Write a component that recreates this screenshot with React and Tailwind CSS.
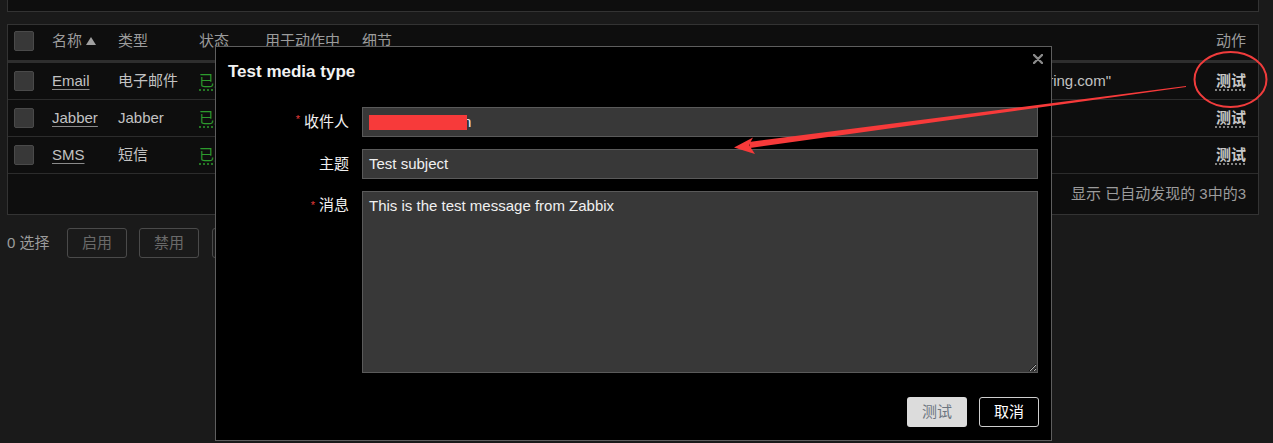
import React from "react";

const Check = () => (
  <div className="w-[20px] h-[20px] rounded-[2px] bg-[#383838] border border-[#4a4a4a]" />
);

const rows = [
  { name: "Email", type: "电子邮件", details: 'SMTP 服务器: "mail.example.com", SMTP helo: "example.com", SMTP 电邮: "zabbix@example-monitoring.com"' },
  { name: "Jabber", type: "Jabber", details: "" },
  { name: "SMS", type: "短信", details: "" },
];

function Row({ r }) {
  return (
    <div className="flex items-center h-[37px] border-b border-[#2c2c2c] text-[15px] text-[#c2c2c2]">
      <div className="w-[38px] pl-[6px]"><Check /></div>
      <div className="w-[66px] pl-[6px]">
        <span className="underline underline-offset-[3px] decoration-[#8a8a8a]">{r.name}</span>
      </div>
      <div className="w-[81px] pl-[6px] whitespace-nowrap">{r.type}</div>
      <div className="w-[66px] pl-[6px] whitespace-nowrap text-[#2d9a2d]">
        <span className="underline decoration-dotted underline-offset-[4px]">已启用</span>
      </div>
      <div className="w-[97px] pl-[6px]"></div>
      <div className="flex-1 min-w-0 pl-[6px] pr-[67px] flex justify-end overflow-hidden whitespace-nowrap">
        <span className="shrink-0">{r.details}</span>
      </div>
      <div className="w-[80px] pr-[12px] text-right font-bold text-[#c8c8c8]">
        <span className="underline decoration-dotted underline-offset-[4px] decoration-[#aaa]">测试</span>
      </div>
    </div>
  );
}

export default function App() {
  return (
    <div className="relative w-[1273px] h-[443px] overflow-hidden bg-[#1a1a1a] font-['Liberation_Sans','Noto_Sans_CJK_SC',sans-serif]">
      <div className="px-[7px]">
        <div className="w-[1252px] h-[12px] border-x border-b border-[#333] bg-[#0e0e0e]" />
        <div className="mt-[12px] w-[1252px] border border-[#333] bg-[#0e0e0e]">
          <div className="flex items-center h-[38px] pb-[3px] border-b-[3px] border-[#2e2e2e] text-[15px] text-[#9c9c9c] box-border">
            <div className="w-[38px] pl-[6px]"><Check /></div>
            <div className="w-[66px] pl-[6px] whitespace-nowrap flex items-center gap-[4px]">
              名称
              <svg width="10" height="8" viewBox="0 0 10 8"><path d="M5 0 L10 8 L0 8 Z" fill="#a0a0a0" /></svg>
            </div>
            <div className="w-[81px] pl-[6px]">类型</div>
            <div className="w-[66px] pl-[6px]">状态</div>
            <div className="w-[97px] pl-[6px] whitespace-nowrap">用于动作中</div>
            <div className="flex-1 pl-[6px]">细节</div>
            <div className="w-[80px] pr-[12px] text-right">动作</div>
          </div>
          {rows.map((r) => (
            <Row key={r.name} r={r} />
          ))}
          <div className="h-[40px] flex items-center justify-end pr-[12px] text-[15px] text-[#9c9c9c]">
            显示 已自动发现的 3中的3
          </div>
        </div>
        <div className="mt-[13px] flex items-center h-[30px] text-[15px] text-[#9c9c9c]">
          <span className="w-[60px]">0 选择</span>
          <button className="w-[60px] h-[30px] rounded-[3px] border border-[#4a4a4a] text-[#6a6a6a]">启用</button>
          <button className="ml-[12px] w-[60px] h-[30px] rounded-[3px] border border-[#4a4a4a] text-[#6a6a6a]">禁用</button>
          <button className="ml-[13px] w-[60px] h-[30px] rounded-[3px] border border-[#4a4a4a] text-[#6a6a6a]">删除</button>
        </div>
      </div>

      {/* Modal */}
      <div className="absolute left-[215px] top-[46px] w-[837px] h-[395px] bg-black border border-[#5e5e5e] z-10">
        <svg className="absolute right-[8px] top-[7px]" width="10" height="10" viewBox="0 0 10 10">
          <path d="M1 1 L9 9 M9 1 L1 9" stroke="#8a8a8a" strokeWidth="2.4" strokeLinecap="round" />
        </svg>
        <div className="pl-[12px] pt-[15px] text-[17px] leading-[20px] font-bold text-[#f2f2f2]">Test media type</div>
        <div className="mt-[25px] flex flex-col gap-[12px] text-[15px] text-[#f0f0f0]">
          <div className="flex items-center">
            <div className="w-[133px] text-right"><span className="text-[#e53a3a] text-[11px] align-top mr-[4px]">*</span>收件人</div>
            <div className="ml-[13px] w-[676px] h-[30px] bg-[#383838] border border-[#5a5a5a] flex items-center pl-[6px]">
              <span className="relative z-10 inline-block w-[98px] h-[15px] bg-[#f73a3a]" />
              <span className="-ml-[4px]">n</span>
            </div>
          </div>
          <div className="flex items-center">
            <div className="w-[133px] text-right">主题</div>
            <div className="ml-[13px] w-[676px] h-[30px] bg-[#383838] border border-[#5a5a5a] flex items-center pl-[6px]">Test subject</div>
          </div>
          <div className="flex items-start">
            <div className="w-[133px] text-right pt-[5px] leading-[18px]"><span className="text-[#e53a3a] text-[11px] align-top mr-[4px]">*</span>消息</div>
            <textarea
              readOnly
              defaultValue="This is the test message from Zabbix"
              className="ml-[13px] w-[676px] h-[182px] bg-[#383838] border border-[#5a5a5a] px-[6px] pt-[5px] leading-[18px] text-[15px] text-[#f0f0f0] outline-none font-['Liberation_Sans',sans-serif]"
            />
          </div>
        </div>
        <div className="mt-[24px] flex justify-end gap-[12px] pr-[12px] text-[15px]">
          <button className="w-[60px] h-[30px] rounded-[3px] bg-[#dcdcdc] text-[#6c7580]">测试</button>
          <button className="w-[60px] h-[30px] rounded-[3px] bg-black border border-[#cfcfcf] text-white">取消</button>
        </div>
      </div>

      {/* Annotation */}
      <svg className="absolute left-0 top-0 z-20 pointer-events-none" width="1273" height="443" viewBox="0 0 1273 443">
        <ellipse cx="1230.5" cy="79.5" rx="36" ry="27.5" fill="none" stroke="#f03c3c" strokeWidth="2" />
        <polygon points="1186,86 1186,87 750,148 749,142" fill="#f73a3a" />
        <polygon points="734,147.5 753,137.5 749,145 755,154" fill="#f73a3a" />
      </svg>
    </div>
  );
}
